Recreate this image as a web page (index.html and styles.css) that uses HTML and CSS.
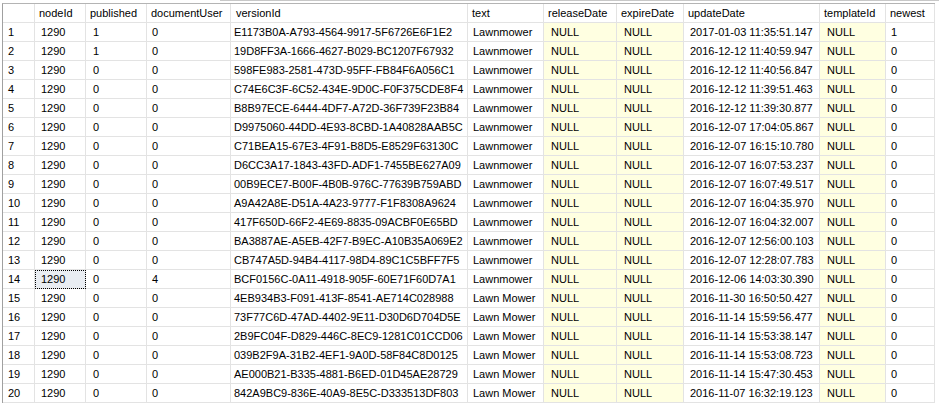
FILE: index.html
```html
<!DOCTYPE html>
<html>
<head>
<meta charset="utf-8">
<link rel="stylesheet" href="styles.css">
</head>
<body>
<div class="topbar"></div>
<div class="grid-wrap">
<table class="results">
<colgroup>
<col class="w-row"><col class="w-node"><col class="w-pub"><col class="w-doc"><col class="w-ver"><col class="w-text"><col class="w-rel"><col class="w-exp"><col class="w-upd"><col class="w-tpl"><col class="w-new">
</colgroup>
<thead>
<tr><th class="c-row"></th><th>nodeId</th><th>published</th><th>documentUser</th><th class="h-ver">versionId</th><th>text</th><th>releaseDate</th><th>expireDate</th><th>updateDate</th><th>templateId</th><th>newest</th></tr>
</thead>
<tbody>
<tr><td class="c-row">1</td><td class="c-node">1290</td><td class="c-pub">1</td><td class="c-doc">0</td><td class="c-ver">E1173B0A-A793-4564-9917-5F6726E6F1E2</td><td class="c-text">Lawnmower</td><td class="c-null">NULL</td><td class="c-null">NULL</td><td class="c-upd">2017-01-03 11:35:51.147</td><td class="c-null">NULL</td><td class="c-new">1</td></tr>
<tr><td class="c-row">2</td><td class="c-node">1290</td><td class="c-pub">1</td><td class="c-doc">0</td><td class="c-ver">19D8FF3A-1666-4627-B029-BC1207F67932</td><td class="c-text">Lawnmower</td><td class="c-null">NULL</td><td class="c-null">NULL</td><td class="c-upd">2016-12-12 11:40:59.947</td><td class="c-null">NULL</td><td class="c-new">0</td></tr>
<tr><td class="c-row">3</td><td class="c-node">1290</td><td class="c-pub">0</td><td class="c-doc">0</td><td class="c-ver">598FE983-2581-473D-95FF-FB84F6A056C1</td><td class="c-text">Lawnmower</td><td class="c-null">NULL</td><td class="c-null">NULL</td><td class="c-upd">2016-12-12 11:40:56.847</td><td class="c-null">NULL</td><td class="c-new">0</td></tr>
<tr><td class="c-row">4</td><td class="c-node">1290</td><td class="c-pub">0</td><td class="c-doc">0</td><td class="c-ver">C74E6C3F-6C52-434E-9D0C-F0F375CDE8F4</td><td class="c-text">Lawnmower</td><td class="c-null">NULL</td><td class="c-null">NULL</td><td class="c-upd">2016-12-12 11:39:51.463</td><td class="c-null">NULL</td><td class="c-new">0</td></tr>
<tr><td class="c-row">5</td><td class="c-node">1290</td><td class="c-pub">0</td><td class="c-doc">0</td><td class="c-ver">B8B97ECE-6444-4DF7-A72D-36F739F23B84</td><td class="c-text">Lawnmower</td><td class="c-null">NULL</td><td class="c-null">NULL</td><td class="c-upd">2016-12-12 11:39:30.877</td><td class="c-null">NULL</td><td class="c-new">0</td></tr>
<tr><td class="c-row">6</td><td class="c-node">1290</td><td class="c-pub">0</td><td class="c-doc">0</td><td class="c-ver">D9975060-44DD-4E93-8CBD-1A40828AAB5C</td><td class="c-text">Lawnmower</td><td class="c-null">NULL</td><td class="c-null">NULL</td><td class="c-upd">2016-12-07 17:04:05.867</td><td class="c-null">NULL</td><td class="c-new">0</td></tr>
<tr><td class="c-row">7</td><td class="c-node">1290</td><td class="c-pub">0</td><td class="c-doc">0</td><td class="c-ver">C71BEA15-67E3-4F91-B8D5-E8529F63130C</td><td class="c-text">Lawnmower</td><td class="c-null">NULL</td><td class="c-null">NULL</td><td class="c-upd">2016-12-07 16:15:10.780</td><td class="c-null">NULL</td><td class="c-new">0</td></tr>
<tr><td class="c-row">8</td><td class="c-node">1290</td><td class="c-pub">0</td><td class="c-doc">0</td><td class="c-ver">D6CC3A17-1843-43FD-ADF1-7455BE627A09</td><td class="c-text">Lawnmower</td><td class="c-null">NULL</td><td class="c-null">NULL</td><td class="c-upd">2016-12-07 16:07:53.237</td><td class="c-null">NULL</td><td class="c-new">0</td></tr>
<tr><td class="c-row">9</td><td class="c-node">1290</td><td class="c-pub">0</td><td class="c-doc">0</td><td class="c-ver">00B9ECE7-B00F-4B0B-976C-77639B759ABD</td><td class="c-text">Lawnmower</td><td class="c-null">NULL</td><td class="c-null">NULL</td><td class="c-upd">2016-12-07 16:07:49.517</td><td class="c-null">NULL</td><td class="c-new">0</td></tr>
<tr><td class="c-row">10</td><td class="c-node">1290</td><td class="c-pub">0</td><td class="c-doc">0</td><td class="c-ver">A9A42A8E-D51A-4A23-9777-F1F8308A9624</td><td class="c-text">Lawnmower</td><td class="c-null">NULL</td><td class="c-null">NULL</td><td class="c-upd">2016-12-07 16:04:35.970</td><td class="c-null">NULL</td><td class="c-new">0</td></tr>
<tr><td class="c-row">11</td><td class="c-node">1290</td><td class="c-pub">0</td><td class="c-doc">0</td><td class="c-ver">417F650D-66F2-4E69-8835-09ACBF0E65BD</td><td class="c-text">Lawnmower</td><td class="c-null">NULL</td><td class="c-null">NULL</td><td class="c-upd">2016-12-07 16:04:32.007</td><td class="c-null">NULL</td><td class="c-new">0</td></tr>
<tr><td class="c-row">12</td><td class="c-node">1290</td><td class="c-pub">0</td><td class="c-doc">0</td><td class="c-ver">BA3887AE-A5EB-42F7-B9EC-A10B35A069E2</td><td class="c-text">Lawnmower</td><td class="c-null">NULL</td><td class="c-null">NULL</td><td class="c-upd">2016-12-07 12:56:00.103</td><td class="c-null">NULL</td><td class="c-new">0</td></tr>
<tr><td class="c-row">13</td><td class="c-node">1290</td><td class="c-pub">0</td><td class="c-doc">0</td><td class="c-ver">CB747A5D-94B4-4117-98D4-89C1C5BFF7F5</td><td class="c-text">Lawnmower</td><td class="c-null">NULL</td><td class="c-null">NULL</td><td class="c-upd">2016-12-07 12:28:07.783</td><td class="c-null">NULL</td><td class="c-new">0</td></tr>
<tr><td class="c-row">14</td><td class="c-node is-selected">1290</td><td class="c-pub">0</td><td class="c-doc">4</td><td class="c-ver">BCF0156C-0A11-4918-905F-60E71F60D7A1</td><td class="c-text">Lawnmower</td><td class="c-null">NULL</td><td class="c-null">NULL</td><td class="c-upd">2016-12-06 14:03:30.390</td><td class="c-null">NULL</td><td class="c-new">0</td></tr>
<tr><td class="c-row">15</td><td class="c-node">1290</td><td class="c-pub">0</td><td class="c-doc">0</td><td class="c-ver">4EB934B3-F091-413F-8541-AE714C028988</td><td class="c-text">Lawn Mower</td><td class="c-null">NULL</td><td class="c-null">NULL</td><td class="c-upd">2016-11-30 16:50:50.427</td><td class="c-null">NULL</td><td class="c-new">0</td></tr>
<tr><td class="c-row">16</td><td class="c-node">1290</td><td class="c-pub">0</td><td class="c-doc">0</td><td class="c-ver">73F77C6D-47AD-4402-9E11-D30D6D704D5E</td><td class="c-text">Lawn Mower</td><td class="c-null">NULL</td><td class="c-null">NULL</td><td class="c-upd">2016-11-14 15:59:56.477</td><td class="c-null">NULL</td><td class="c-new">0</td></tr>
<tr><td class="c-row">17</td><td class="c-node">1290</td><td class="c-pub">0</td><td class="c-doc">0</td><td class="c-ver">2B9FC04F-D829-446C-8EC9-1281C01CCD06</td><td class="c-text">Lawn Mower</td><td class="c-null">NULL</td><td class="c-null">NULL</td><td class="c-upd">2016-11-14 15:53:38.147</td><td class="c-null">NULL</td><td class="c-new">0</td></tr>
<tr><td class="c-row">18</td><td class="c-node">1290</td><td class="c-pub">0</td><td class="c-doc">0</td><td class="c-ver">039B2F9A-31B2-4EF1-9A0D-58F84C8D0125</td><td class="c-text">Lawn Mower</td><td class="c-null">NULL</td><td class="c-null">NULL</td><td class="c-upd">2016-11-14 15:53:08.723</td><td class="c-null">NULL</td><td class="c-new">0</td></tr>
<tr><td class="c-row">19</td><td class="c-node">1290</td><td class="c-pub">0</td><td class="c-doc">0</td><td class="c-ver">AE000B21-B335-4881-B6ED-01D45AE28729</td><td class="c-text">Lawn Mower</td><td class="c-null">NULL</td><td class="c-null">NULL</td><td class="c-upd">2016-11-14 15:47:30.453</td><td class="c-null">NULL</td><td class="c-new">0</td></tr>
<tr><td class="c-row">20</td><td class="c-node">1290</td><td class="c-pub">0</td><td class="c-doc">0</td><td class="c-ver">842A9BC9-836E-40A9-8E5C-D333513DF803</td><td class="c-text">Lawn Mower</td><td class="c-null">NULL</td><td class="c-null">NULL</td><td class="c-upd">2016-11-07 16:32:19.123</td><td class="c-null">NULL</td><td class="c-new">0</td></tr>
</tbody>
</table>
</div>
</body>
</html>
```
FILE: styles.css
```css
html, body {
  margin: 0;
  padding: 0;
  background: #ffffff;
}
body {
  font-family: "Liberation Sans", Arial, sans-serif;
  font-size: 11px;
  color: #000000;
}
.topbar {
  margin-left: 220px;
  height: 2px;
  border-top: 1px solid #c8c8c8;
}
.grid-wrap {
  margin-left: 2px;
  border-left: 1px solid #a0a0a0;
  border-top: 1px solid #b4b4b4;
  width: 932px;
}
.results {
  table-layout: fixed;
  border-collapse: separate;
  border-spacing: 0;
  width: 932px;
}
.w-row { width: 32px; }
.w-node { width: 51px; }
.w-pub { width: 61px; }
.w-doc { width: 84px; }
.w-ver { width: 237px; }
.w-text { width: 76px; }
.w-rel { width: 73px; }
.w-exp { width: 67px; }
.w-upd { width: 136px; }
.w-tpl { width: 66px; }
.w-new { width: 49px; }

.results th,
.results td {
  box-sizing: border-box;
  height: 19px;
  padding: 0 0 0 7px;
  line-height: 18px;
  border-right: 1px solid #e3e3e3;
  border-bottom: 1px solid #e3e3e3;
  white-space: nowrap;
  overflow: hidden;
  text-align: left;
  font-weight: normal;
  vertical-align: middle;
}
.results th {
  padding-left: 4px;
}
.results th.h-ver {
  padding-left: 5px;
}
.results td.c-row { padding-left: 5px; }
.results td.c-node { padding-left: 6px; }
.results td.c-pub { padding-left: 7px; }
.results td.c-doc { padding-left: 5px; }
.results td.c-ver { padding-left: 3px; }
.results td.c-text { padding-left: 5px; }
.results td.c-null { padding-left: 7px; background: #ffffe1; }
.results td.c-upd { padding-left: 6px; }
.results td.c-new { padding-left: 5px; }
.results td.is-selected {
  background: #e9edf2;
  outline: 1px dotted #000000;
  outline-offset: -1px;
}
```
